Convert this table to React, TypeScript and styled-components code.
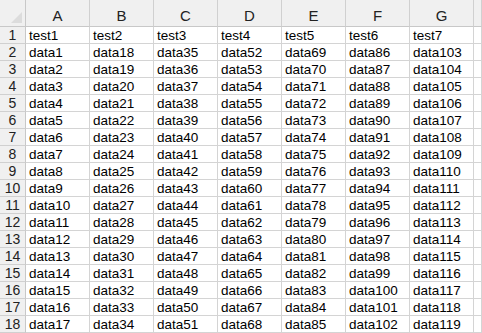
import React from 'react';
import styled, { createGlobalStyle } from 'styled-components';

const GlobalStyle = createGlobalStyle`
  html, body {
    margin: 0;
    padding: 0;
    background: #ffffff;
    overflow: hidden;
  }
`;

const Sheet = styled.div`
  width: 482px;
  height: 333px;
  overflow: hidden;
  font-family: 'Liberation Sans', Arial, sans-serif;
  font-size: 13.5px;
  color: #000;
  background: #fff;
`;

const Row = styled.div<{ $head?: boolean }>`
  display: grid;
  grid-template-columns: 26px repeat(7, 64px) 1fr;
  height: ${p => (p.$head ? '27px' : '17px')};
  background: ${p => (p.$head ? '#f0f0f0' : '#fff')};
`;

const Corner = styled.div`
  position: relative;
  border-right: 1px solid #c8c8c8;
  border-bottom: 1px solid #c8c8c8;
  background: #f0f0f0;

  &::after {
    content: '';
    position: absolute;
    right: 3px;
    bottom: 3px;
    width: 0;
    height: 0;
    border-left: 11px solid transparent;
    border-bottom: 11px solid #dcdcdc;
  }
`;

const ColHead = styled.div`
  display: flex;
  align-items: flex-end;
  justify-content: center;
  padding-bottom: 3px;
  border-right: 1px solid #d0d0d0;
  border-bottom: 1px solid #c8c8c8;
  color: #222;
  font-size: 15px;
  line-height: 15px;
`;

const RowHead = styled.div`
  display: flex;
  align-items: center;
  justify-content: center;
  background: #f0f0f0;
  border-right: 1px solid #c8c8c8;
  border-bottom: 1px solid #d0d0d0;
  color: #222;
  font-size: 14px;
  line-height: 16px;
`;

const Cell = styled.div`
  padding-left: 3px;
  border-right: 1px solid #d4d4d4;
  border-bottom: 1px solid #d4d4d4;
  line-height: 17px;
  white-space: nowrap;
  overflow: hidden;
`;

const letters = ['A', 'B', 'C', 'D', 'E', 'F', 'G'];

const cellText = (row: number, col: number) =>
  row === 1 ? `test${col + 1}` : `data${col * 17 + row - 1}`;

const App: React.FC = () => {
  const rows = Array.from({ length: 18 }, (_, i) => i + 1);
  return (
    <>
      <GlobalStyle />
      <Sheet>
        <Row $head>
          <Corner />
          {letters.map(l => (
            <ColHead key={l}>{l}</ColHead>
          ))}
          <ColHead />
        </Row>
        {rows.map(r => (
          <Row key={r}>
            <RowHead>{r}</RowHead>
            {letters.map((l, c) => (
              <Cell key={l}>{cellText(r, c)}</Cell>
            ))}
            <Cell />
          </Row>
        ))}
      </Sheet>
    </>
  );
};

export default App;
